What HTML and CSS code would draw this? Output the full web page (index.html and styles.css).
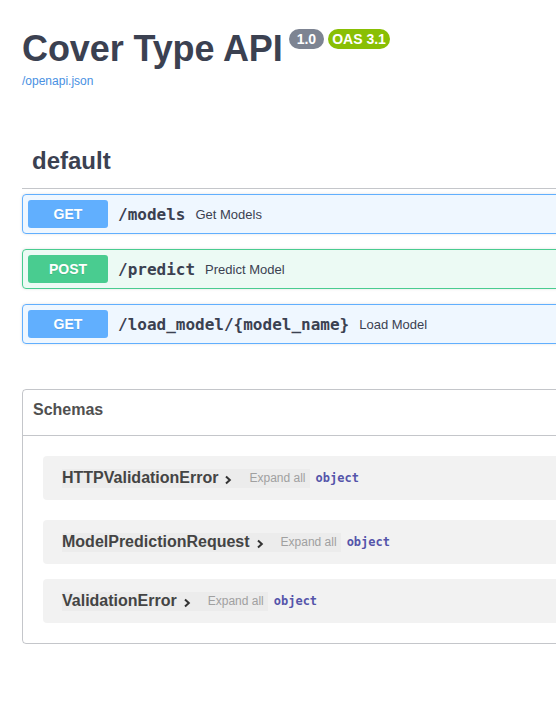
FILE: index.html
```html
<!DOCTYPE html>
<html>
<head>
<meta charset="utf-8">
<title>Cover Type API</title>
<link rel="stylesheet" href="styles.css">
</head>
<body>
<div class="wrapper">
  <div class="info">
    <div class="title-row">
      <h2 class="title">Cover Type API</h2>
      <span class="badge badge-version">1.0</span>
      <span class="badge badge-oas">OAS 3.1</span>
    </div>
    <a class="spec-link" href="#">/openapi.json</a>
  </div>

  <div class="tag-section">
    <h3 class="tag">default</h3>

    <div class="opblock opblock-get">
      <span class="method">GET</span>
      <span class="path">/models</span>
      <span class="summary">Get Models</span>
    </div>
    <div class="opblock opblock-post">
      <span class="method">POST</span>
      <span class="path">/predict</span>
      <span class="summary">Predict Model</span>
    </div>
    <div class="opblock opblock-get">
      <span class="method">GET</span>
      <span class="path">/load_model/{model_name}</span>
      <span class="summary">Load Model</span>
    </div>
  </div>

  <section class="models">
    <h4 class="models-title">Schemas</h4>
    <div class="model-list">
      <div class="model-container">
        <span class="model-name">HTTPValidationError<svg class="chev" viewBox="0 0 10 10" width="10" height="10"><path d="M3 1.5 L6.8 5 L3 8.5" fill="none" stroke="#333" stroke-width="2"/></svg></span>
        <span class="expand">Expand all</span>
        <span class="type">object</span>
      </div>
      <div class="model-container">
        <span class="model-name">ModelPredictionRequest<svg class="chev" viewBox="0 0 10 10" width="10" height="10"><path d="M3 1.5 L6.8 5 L3 8.5" fill="none" stroke="#333" stroke-width="2"/></svg></span>
        <span class="expand">Expand all</span>
        <span class="type">object</span>
      </div>
      <div class="model-container">
        <span class="model-name">ValidationError<svg class="chev" viewBox="0 0 10 10" width="10" height="10"><path d="M3 1.5 L6.8 5 L3 8.5" fill="none" stroke="#333" stroke-width="2"/></svg></span>
        <span class="expand">Expand all</span>
        <span class="type">object</span>
      </div>
    </div>
  </section>
</div>
</body>
</html>
```

FILE: styles.css
```css
html, body {
  margin: 0;
  padding: 0;
  background: #fff;
  overflow: hidden;
}
body {
  font-family: "Liberation Sans", Arial, sans-serif;
  color: #3b4151;
}
.wrapper {
  width: 700px;
  padding: 0 22px;
}
.info {
  padding-top: 27px;
}
.title-row {
  display: flex;
  align-items: flex-start;
}
.title {
  margin: 0;
  font-size: 36px;
  line-height: 43px;
  font-weight: 700;
  color: #3b4151;
  letter-spacing: -0.1px;
}
.badge {
  display: inline-block;
  margin-top: 2px;
  height: 20px;
  line-height: 20px;
  border-radius: 57px;
  color: #fff;
  font-size: 14px;
  font-weight: 700;
}
.badge-version {
  background: #7d8492;
  margin-left: 6px;
  padding: 0 8px;
}
.badge-oas {
  background: #89bf04;
  margin-left: 4px;
  padding: 0 4px;
}
.spec-link {
  display: block;
  margin-top: 4px;
  font-size: 12px;
  line-height: 14px;
  color: #4990e2;
  text-decoration: none;
}
.tag-section {
  margin-top: 49px;
}
.tag {
  margin: 0 0 5px;
  padding: 10px 20px 13px 10px;
  font-size: 24px;
  line-height: 28px;
  font-weight: 700;
  color: #3b4151;
  border-bottom: 1px solid rgba(59, 65, 81, 0.3);
}
.opblock {
  display: flex;
  align-items: center;
  margin-bottom: 15px;
  padding: 5px;
  border: 1px solid;
  border-radius: 4px;
  box-shadow: 0 0 3px rgba(0, 0, 0, 0.12);
}
.opblock-get {
  border-color: #61affe;
  background: rgba(97, 175, 254, 0.1);
}
.opblock-post {
  border-color: #49cc90;
  background: rgba(73, 204, 144, 0.1);
}
.method {
  width: 80px;
  height: 28px;
  line-height: 28px;
  text-align: center;
  border-radius: 3px;
  color: #fff;
  font-size: 14px;
  font-weight: 700;
  text-shadow: 0 1px 0 rgba(0, 0, 0, 0.1);
}
.opblock-get .method { background: #61affe; }
.opblock-post .method { background: #49cc90; }
.path {
  padding: 0 10px;
  font-family: "DejaVu Sans Mono", monospace;
  font-size: 16px;
  font-weight: 700;
  color: #3b4151;
}
.summary {
  font-size: 13px;
  color: #3b4151;
}
.models {
  margin-top: 45px;
  border: 1px solid rgba(59, 65, 81, 0.3);
  border-radius: 4px;
}
.models-title {
  margin: 0;
  padding: 10px 20px 15px 10px;
  font-size: 16px;
  line-height: 20px;
  font-weight: 700;
  color: #505050;
  border-bottom: 1px solid rgba(59, 65, 81, 0.3);
}
.model-list {
  padding: 20px 0;
}
.model-container {
  display: flex;
  align-items: center;
  height: 44px;
  margin: 0 20px 15px;
  padding-left: 19px;
  background: rgba(0, 0, 0, 0.05);
  border-radius: 4px;
}
.model-container:first-child {
  margin-bottom: 20px;
}
.model-container:last-child {
  margin-bottom: 0;
}
.model-name {
  display: inline-flex;
  align-items: center;
  height: 19px;
  padding-right: 10px;
  font-size: 16px;
  font-weight: 700;
  color: #444;
  background: rgba(0, 0, 0, 0.025);
}
.chev {
  margin-left: 5px;
  margin-top: 4px;
}
.expand {
  height: 19px;
  line-height: 19px;
  padding: 0 4px 0 6px;
  font-size: 12px;
  color: #a0a0a0;
  background: rgba(0, 0, 0, 0.025);
}
.type {
  margin-left: 6px;
  font-family: "DejaVu Sans Mono", monospace;
  font-size: 12px;
  font-weight: 700;
  color: #55a;
}
```
